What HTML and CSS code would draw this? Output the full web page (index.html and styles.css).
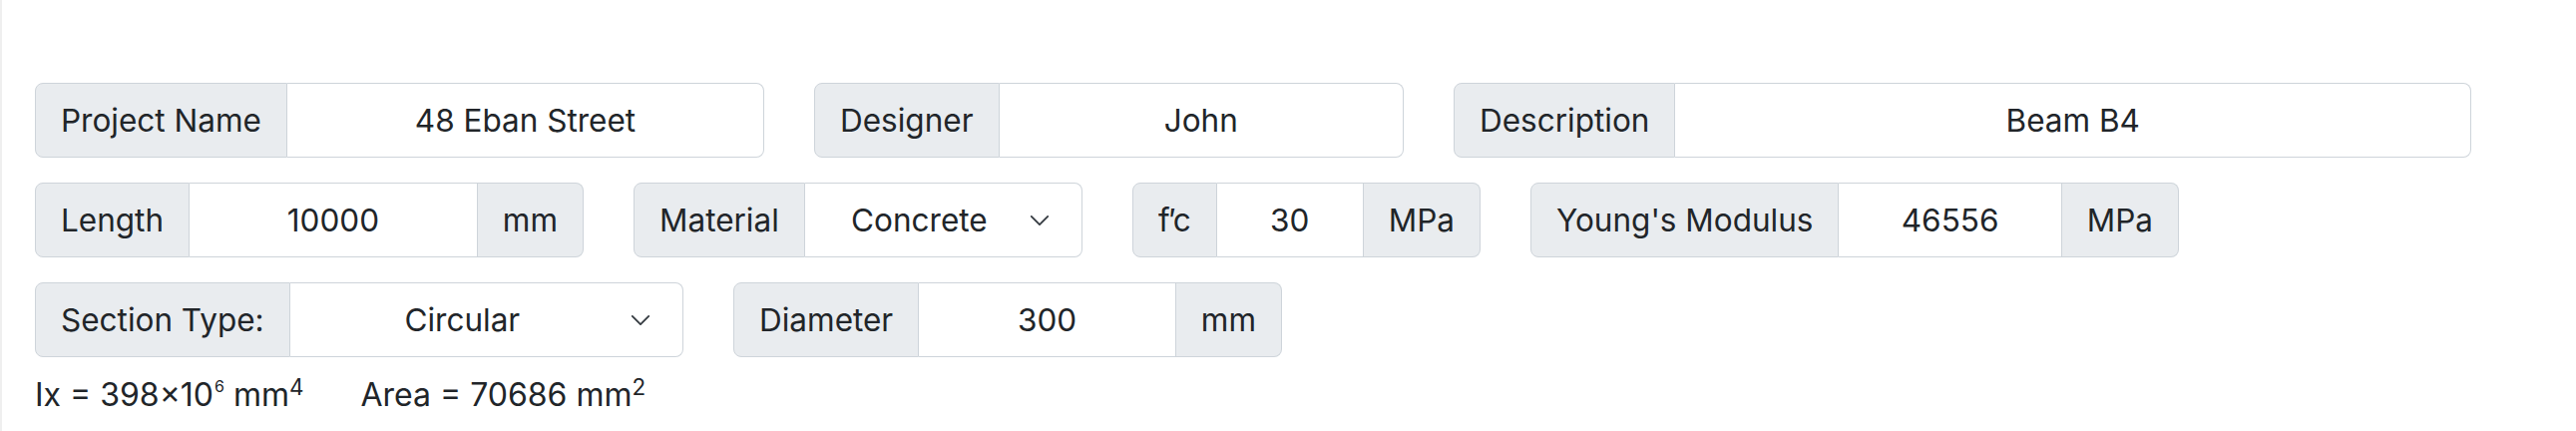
FILE: index.html
```html
<!DOCTYPE html>
<html lang="en">
<head>
    <meta charset="UTF-8">
    <meta name="viewport" content="width=device-width, initial-scale=1.0">
    <title>Beam Section</title>
    <link rel="stylesheet" href="styles.css">
</head>
<body>
    <div class="page">
        <div class="row">
            <div class="group g-project">
                <span class="addon">Project Name</span>
                <input class="field" type="text" value="48 Eban Street">
            </div>
            <div class="group g-designer">
                <span class="addon">Designer</span>
                <input class="field" type="text" value="John">
            </div>
            <div class="group g-desc">
                <span class="addon">Description</span>
                <input class="field" type="text" value="Beam B4">
            </div>
        </div>

        <div class="row">
            <div class="group g-length">
                <span class="addon">Length</span>
                <input class="field" type="text" value="10000">
                <span class="addon unit">mm</span>
            </div>
            <div class="group g-material">
                <span class="addon">Material</span>
                <div class="select">
                    Concrete
                    <svg class="chevron" viewBox="0 0 16 16" width="22" height="22"><path d="M2 5l6 6 6-6" fill="none" stroke="#343a40" stroke-width="1.3" stroke-linecap="round" stroke-linejoin="round"/></svg>
                </div>
            </div>
            <div class="group g-fc">
                <span class="addon">f<span class="prime">&prime;</span>c</span>
                <input class="field" type="text" value="30">
                <span class="addon unit">MPa</span>
            </div>
            <div class="group g-young">
                <span class="addon">Young's Modulus</span>
                <input class="field" type="text" value="46556">
                <span class="addon unit">MPa</span>
            </div>
        </div>

        <div class="row">
            <div class="group g-section">
                <span class="addon">Section Type:</span>
                <div class="select">
                    Circular
                    <svg class="chevron" viewBox="0 0 16 16" width="22" height="22"><path d="M2 5l6 6 6-6" fill="none" stroke="#343a40" stroke-width="1.3" stroke-linecap="round" stroke-linejoin="round"/></svg>
                </div>
            </div>
            <div class="group g-diameter">
                <span class="addon">Diameter</span>
                <input class="field" type="text" value="300">
                <span class="addon unit">mm</span>
            </div>
        </div>

        <div class="props">
            <span>Ix = 398×10<sup class="exp">6</sup> mm<sup>4</sup></span>
            <span>Area = 70686 mm<sup>2</sup></span>
        </div>
    </div>
</body>
</html>
```

FILE: styles.css
```css
* {
    margin: 0;
    padding: 0;
    box-sizing: border-box;
}

body {
    font-family: Inter, "Noto Sans", sans-serif;
    color: #212529;
    background: #fff;
}

.page {
    border-left: 2px solid #efefef;
    height: 432px;
    padding: 83px 0 0 33px;
}

.row {
    display: flex;
    gap: 50px;
    margin-bottom: 25px;
}

.group {
    display: flex;
    height: 75px;
    font-size: 31.5px;
}

.addon {
    display: flex;
    align-items: center;
    justify-content: center;
    padding: 0 25px;
    background: #e9ecef;
    border: 1px solid #ced4da;
    white-space: nowrap;
}

.addon:first-child {
    border-radius: 8px 0 0 8px;
}

.addon:last-child {
    border-radius: 0 8px 8px 0;
}

.prime {
    margin: 0 -3px 0 -1px;
}

.field,
.select {
    flex: 1;
    min-width: 0;
    background: #fff;
    border: 1px solid #ced4da;
    border-left: none;
    font: inherit;
    color: inherit;
    text-align: center;
    padding: 0 24px;
    outline: none;
}

.field:last-child,
.select:last-child {
    border-radius: 0 8px 8px 0;
}

.field + .addon {
    border-left: none;
}

.select {
    position: relative;
    display: flex;
    align-items: center;
    justify-content: center;
    padding: 0 72px 0 24px;
}

.chevron {
    position: absolute;
    right: 31px;
    top: 50%;
    margin-top: -11px;
}

.g-project { width: 731px; }
.g-designer { width: 591px; }
.g-desc { width: 1020px; }
.g-length { width: 550px; }
.g-material { width: 450px; }
.g-fc { width: 349px; }
.g-young { width: 650px; }
.g-section { width: 650px; }
.g-diameter { width: 550px; }

.props {
    display: flex;
    gap: 57px;
    font-size: 32px;
    line-height: 1.2;
    margin-top: -6px;
}

.props sup {
    font-size: 0.7em;
    line-height: 0;
    position: relative;
    top: -0.5em;
    vertical-align: baseline;
}

.props sup.exp {
    font-size: 0.5em;
    top: -0.85em;
    margin-left: 1px;
}
```
